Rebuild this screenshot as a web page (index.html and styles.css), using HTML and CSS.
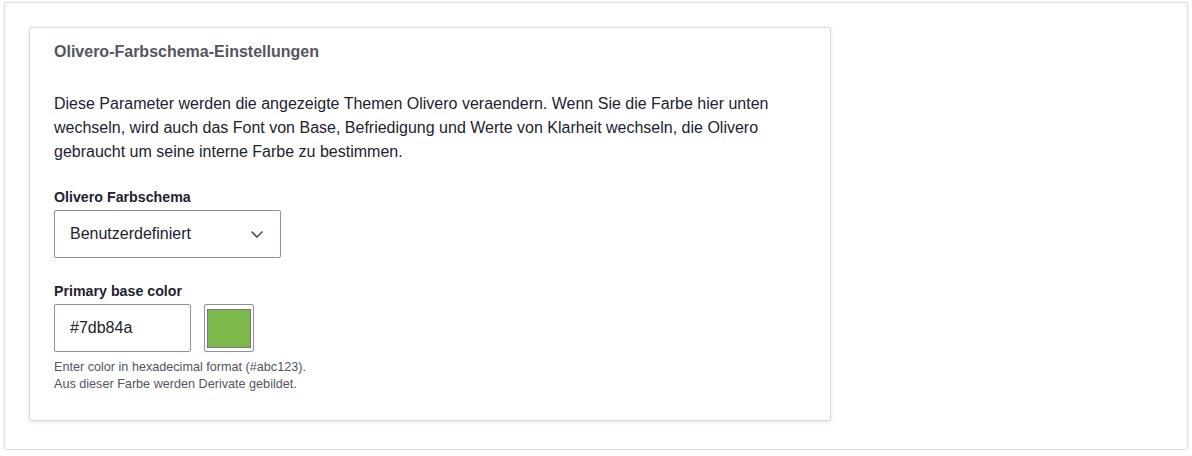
FILE: index.html
```html
<!DOCTYPE html>
<html lang="de">
<head>
<meta charset="utf-8">
<title>Olivero Farbschema</title>
<link rel="stylesheet" href="styles.css">
</head>
<body>
<div class="card">
  <fieldset class="fieldset">
    <legend class="legend">Olivero-Farbschema-Einstellungen</legend>
    <div class="fieldset-body">
      <p class="intro">Diese Parameter werden die angezeigte Themen Olivero veraendern. Wenn Sie die Farbe hier unten wechseln, wird auch das Font von Base, Befriedigung und Werte von Klarheit wechseln, die Olivero gebraucht um seine interne Farbe zu bestimmen.</p>
      <div class="item">
        <label class="label">Olivero Farbschema</label>
        <div class="select">
          <span>Benutzerdefiniert</span>
          <svg class="chev" width="14" height="9" viewBox="0 0 14 9"><path d="M1.5 1.5 L7 7 L12.5 1.5" fill="none" stroke="#545560" stroke-width="1.6"/></svg>
        </div>
      </div>
      <div class="item item-color">
        <label class="label">Primary base color</label>
        <div class="color-row">
          <div class="input">#7db84a</div>
          <div class="swatch"><div class="swatch-fill"></div></div>
        </div>
        <div class="desc">Enter color in hexadecimal format (#abc123).<br>Aus dieser Farbe werden Derivate gebildet.</div>
      </div>
    </div>
  </fieldset>
</div>
</body>
</html>
```
FILE: styles.css
```css
* { box-sizing: border-box; }
html, body { margin: 0; background: #fff; }
body {
  padding: 2px 4px 0 4px;
  font-family: "Liberation Sans", Arial, sans-serif;
  color: #222330;
}
.card {
  width: 1184px;
  height: 448px;
  border: 1px solid #dedfe4;
  border-radius: 2px;
  box-shadow: 0 1px 3px rgba(0,0,0,0.08);
  padding: 24px;
}
.fieldset {
  margin: 0;
  width: 802px;
  height: 394px;
  border: 1px solid #d8d9de;
  border-radius: 2px;
  box-shadow: 0 1px 4px rgba(0,0,0,0.1);
  padding: 14px 24px 0 24px;
  position: relative;
}
.legend {
  float: left;
  width: 100%;
  padding: 0;
  font-size: 16px;
  font-weight: bold;
  line-height: 20px;
  color: #545560;
}
.fieldset-body { clear: both; padding-top: 30px; }
.intro {
  margin: 0;
  font-size: 16px;
  line-height: 24px;
  color: #222330;
  max-width: 760px;
}
.item { margin-top: 24px; }
.item-color { margin-top: 24px; }
.label {
  display: block;
  font-size: 14.22px;
  font-weight: bold;
  line-height: 18px;
  margin-bottom: 4px;
  color: #222330;
}
.select {
  width: 227px;
  height: 48px;
  border: 1px solid #8e929c;
  border-radius: 2px;
  display: flex;
  align-items: center;
  justify-content: space-between;
  padding: 0 16px 0 15px;
  font-size: 16px;
  color: #222330;
}
.chev { margin-top: 1px; }
.color-row { display: flex; gap: 13px; align-items: flex-start; }
.input {
  width: 137px;
  height: 48px;
  border: 1px solid #8e929c;
  border-radius: 2px;
  padding: 0 15px;
  display: flex;
  align-items: center;
  font-size: 16px;
  color: #222330;
}
.swatch {
  width: 50px;
  height: 48px;
  border: 1px solid #8e929c;
  border-radius: 2px;
  padding: 4px 2px 3px 2px;
}
.swatch-fill {
  width: 100%;
  height: 100%;
  background: #7db84a;
  border: 1px solid #767676;
}
.desc {
  margin-top: 7px;
  font-size: 12.64px;
  line-height: 17px;
  color: #545560;
}
```
